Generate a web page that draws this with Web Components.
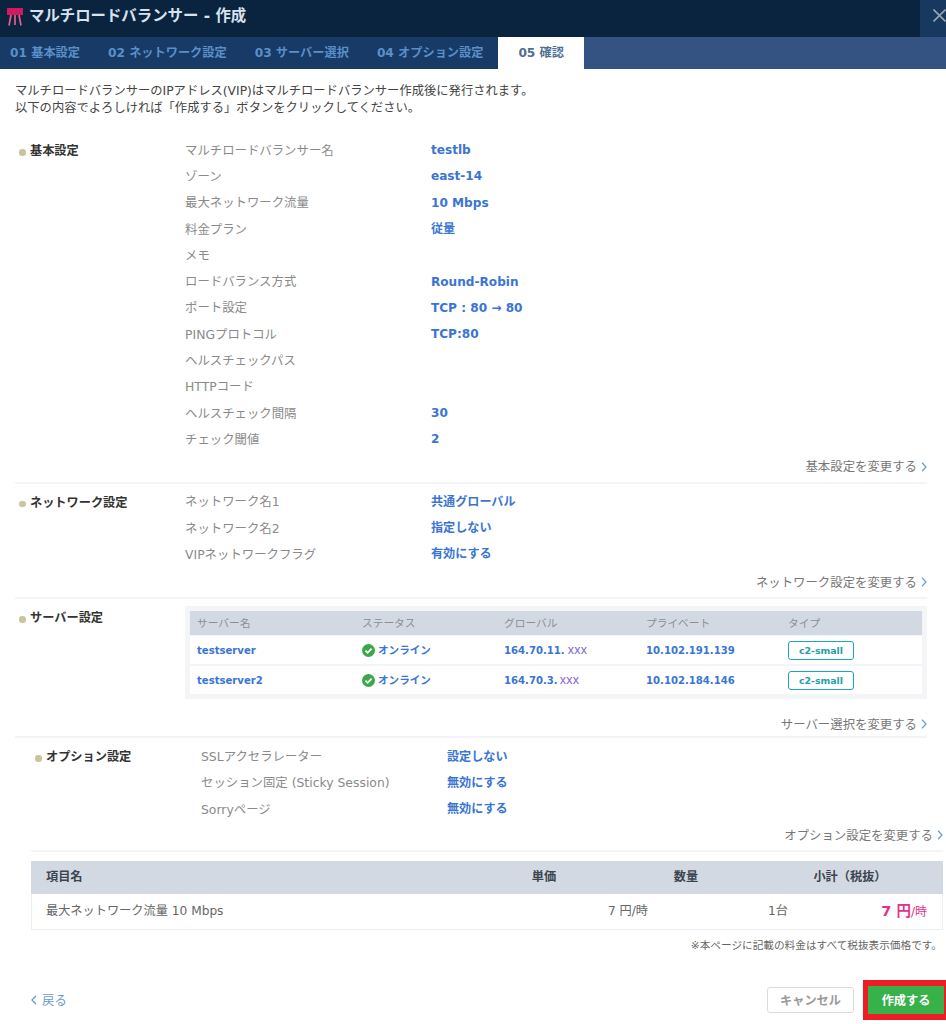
<!DOCTYPE html>
<html lang="ja">
<head>
<meta charset="utf-8">
<title>マルチロードバランサー - 作成</title>
<style>
  html, body { margin:0; padding:0; background:#fff; }
  body { width:946px; height:1024px; overflow:hidden; font:12.4px/17px "DejaVu Sans","Noto Sans CJK JP",sans-serif; color:#555; }
</style>
</head>
<body>
<lb-dialog>
  <lb-header slot="header">マルチロードバランサー - 作成</lb-header>
  <lb-tabs slot="tabs">
    <lb-tab>01 基本設定</lb-tab>
    <lb-tab>02 ネットワーク設定</lb-tab>
    <lb-tab>03 サーバー選択</lb-tab>
    <lb-tab>04 オプション設定</lb-tab>
    <lb-tab active>05 確認</lb-tab>
  </lb-tabs>

  <lb-intro>マルチロードバランサーのIPアドレス(VIP)はマルチロードバランサー作成後に発行されます。<br>以下の内容でよろしければ「作成する」ボタンをクリックしてください。</lb-intro>

  <lb-section title="基本設定" link="基本設定を変更する" first>
    <lb-row key="マルチロードバランサー名">testlb</lb-row>
    <lb-row key="ゾーン">east-14</lb-row>
    <lb-row key="最大ネットワーク流量">10 Mbps</lb-row>
    <lb-row key="料金プラン">従量</lb-row>
    <lb-row key="メモ"></lb-row>
    <lb-row key="ロードバランス方式">Round-Robin</lb-row>
    <lb-row key="ポート設定">TCP : 80 → 80</lb-row>
    <lb-row key="PINGプロトコル">TCP:80</lb-row>
    <lb-row key="ヘルスチェックパス"></lb-row>
    <lb-row key="HTTPコード"></lb-row>
    <lb-row key="ヘルスチェック間隔">30</lb-row>
    <lb-row key="チェック閾値">2</lb-row>
  </lb-section>

  <lb-section title="ネットワーク設定" link="ネットワーク設定を変更する">
    <lb-row key="ネットワーク名1">共通グローバル</lb-row>
    <lb-row key="ネットワーク名2">指定しない</lb-row>
    <lb-row key="VIPネットワークフラグ">有効にする</lb-row>
  </lb-section>

  <lb-section title="サーバー設定" link="サーバー選択を変更する" table>
    <lb-servers>
      <lb-server name="testserver" global="164.70.11." mask="xxx" gap="3" private="10.102.191.139" type="c2-small"></lb-server>
      <lb-server name="testserver2" global="164.70.3." mask="xxx" gap="2" private="10.102.184.146" type="c2-small"></lb-server>
    </lb-servers>
  </lb-section>

  <lb-section title="オプション設定" link="オプション設定を変更する" shifted>
    <lb-row key="SSLアクセラレーター">設定しない</lb-row>
    <lb-row key="セッション固定 (Sticky Session)">無効にする</lb-row>
    <lb-row key="Sorryページ">無効にする</lb-row>
  </lb-section>

  <lb-bill></lb-bill>
  <lb-footer></lb-footer>
</lb-dialog>

<script>
const chevron = (dir, color) => `<svg width="6" height="10" viewBox="0 0 6 10" fill="none" stroke="${color}" stroke-width="1.3"><path d="${dir == 'left' ? 'M5 .8 1 5l4 4.2' : 'M1 .8 5 5 1 9.2'}"/></svg>`;

class LbDialog extends HTMLElement {
  connectedCallback() {
    this.attachShadow({mode: 'open'}).innerHTML = `
      <style>
        :host { display:flex; flex-direction:column; width:946px; height:1024px; }
        main { padding:14px 19px 0 15px; }
      </style>
      <slot name="header"></slot>
      <slot name="tabs"></slot>
      <main><slot></slot></main>`;
  }
}

class LbHeader extends HTMLElement {
  connectedCallback() {
    this.attachShadow({mode: 'open'}).innerHTML = `
      <style>
        :host { display:flex; align-items:center; height:37px; background:#0a2440; }
        svg.logo { margin:0 5px 4px 7px; flex:none; }
        h1 { flex:1; margin:0 0 6px; font:bold 15.4px/22px "DejaVu Sans","Noto Sans CJK JP",sans-serif; color:#d8e2ee; }
        button { width:26px; height:37px; padding:0 0 6px 13px; flex:none; border:0; background:#17395f; display:flex; align-items:center; justify-content:flex-start; overflow:hidden; }
      </style>
      <svg class="logo" width="17" height="18" viewBox="0 0 17 18"><rect width="16" height="7" fill="#d2185f"/><path d="M4 7 2 17.5M8 7v10M12 7l2 10.5" stroke="#e0608f" stroke-width="1.7" fill="none"/></svg>
      <h1><slot></slot></h1>
      <button aria-label="閉じる"><svg width="13" height="13" viewBox="0 0 13 13" stroke="#98a4b0" stroke-width="1.6" style="flex:none"><path d="M.5.5l12 12M12.5.5l-12 12"/></svg></button>`;
  }
}

class LbTabs extends HTMLElement {
  connectedCallback() {
    this.attachShadow({mode: 'open'}).innerHTML = `
      <style>
        :host { display:flex; height:32px; background:#345383; }
        div { display:flex; background:#173a66; }
        .rest { flex:1; background:none; }
      </style>
      <div><slot></slot></div><div class="rest"></div>`;
  }
}

class LbTab extends HTMLElement {
  connectedCallback() {
    this.attachShadow({mode: 'open'}).innerHTML = `
      <style>
        :host { display:flex; align-items:center; padding:0 15px 0 13px; font:bold 12.2px/17px "DejaVu Sans","Noto Sans CJK JP",sans-serif; color:#5b8fc9; white-space:nowrap; }
        :host(:first-child) { padding-left:10px; }
        :host([active]) { background:#fff; color:#4f7095; padding:0 20px; }
      </style>
      <slot></slot>`;
  }
}

class LbIntro extends HTMLElement {
  connectedCallback() {
    this.attachShadow({mode: 'open'}).innerHTML = `
      <style>:host { display:block; margin-bottom:20px; color:#444; font-size:12.3px; line-height:17px; }</style>
      <slot></slot>`;
  }
}

class LbSection extends HTMLElement {
  connectedCallback() {
    const title = this.getAttribute('title'), link = this.getAttribute('link');
    this.removeAttribute('title');
    this.attachShadow({mode: 'open'}).innerHTML = `
      <style>
        :host { display:block; border-bottom:2px solid #f3f4f7; padding:5px 0 5px; }
        :host([first]) { padding-top:0; }
        :host([shifted]) { margin:0 -16px 0 16px; padding-top:5px; }
        :host([table]) { padding-top:7px; padding-bottom:2px; }
        .grid { display:grid; grid-template-columns:170px 1fr; }
        h2 { margin:0; padding:6px 0 0 15px; font:bold 12.2px/17px "DejaVu Sans","Noto Sans CJK JP",sans-serif; color:#333; display:flex; align-items:center; position:relative; height:17px; }
        h2::before { content:""; position:absolute; left:4px; top:12px; width:6.5px; height:6.5px; border-radius:50%; background:#c9c49c; }
        :host([table]) h2 { padding-top:4px; }
        :host([table]) h2::before { top:10px; }
        a { display:flex; justify-content:flex-end; align-items:center; gap:4px; height:20px; margin-top:4px; color:#777; text-decoration:none; }
        :host(:nth-of-type(2)) a { margin-top:5px; }
        :host([table]) a { margin-top:15px; }
        :host([shifted]) a { margin-top:3px; }
      </style>
      <div class="grid">
        <h2>${title}</h2>
        <div><slot></slot></div>
      </div>
      <a href="#">${link}${chevron('right', '#6f9fd8')}</a>`;
  }
}

class LbRow extends HTMLElement {
  connectedCallback() {
    this.attachShadow({mode: 'open'}).innerHTML = `
      <style>
        :host { display:grid; grid-template-columns:246px 1fr; height:26.3px; align-items:center; }
        .k { color:#8a8a8a; white-space:nowrap; }
        .v { color:#3a75d4; font-weight:bold; font-size:12.1px; padding-top:1px; }
      </style>
      <div class="k">${this.getAttribute('key')}</div>
      <div class="v"><slot></slot></div>`;
  }
}

class LbServers extends HTMLElement {
  connectedCallback() {
    this.attachShadow({mode: 'open'}).innerHTML = `
      <style>
        :host { display:block; background:#f4f5f7; padding:5px; font-size:10.7px; }
        .head { display:grid; grid-template-columns:165px 142px 142px 142px 1fr; height:24px; align-items:center; padding-left:7px; background:#d3d9e2; color:#8b8f94; margin-bottom:1px; }
      </style>
      <div class="head"><span>サーバー名</span><span>ステータス</span><span>グローバル</span><span>プライベート</span><span>タイプ</span></div>
      <slot></slot>`;
  }
}

class LbServer extends HTMLElement {
  connectedCallback() {
    const a = n => this.getAttribute(n);
    this.attachShadow({mode: 'open'}).innerHTML = `
      <style>
        :host { display:grid; grid-template-columns:165px 142px 142px 142px 1fr; height:28px; align-items:center; padding-left:7px; background:#fff; color:#3a75d4; font-weight:bold; font-size:10.6px; }
        :host(:last-child) { margin-top:2px; }
        .lat { font-size:10.1px; }
        .st { display:flex; align-items:center; gap:3px; }
        i { font:normal 12.5px "Liberation Sans",sans-serif; color:#8066d0; letter-spacing:.3px; }
        b { box-sizing:border-box; width:66px; height:19px; border:1px solid #1aa8b8; border-radius:3px; font-size:9.4px; color:#26a0a8; display:flex; align-items:center; justify-content:center; }
      </style>
      <span class="lat">${a('name')}</span>
      <span class="st"><svg width="13" height="13" viewBox="0 0 13 13"><circle cx="6.5" cy="6.5" r="6.5" fill="#3aa84a"/><path d="M3.4 6.6 5.6 8.8 9.6 4.6" fill="none" stroke="#fff" stroke-width="1.8"/></svg>オンライン</span>
      <span class="lat">${a('global')}<i style="margin-left:${a('gap')}px">${a('mask')}</i></span>
      <span class="lat">${a('private')}</span>
      <span><b>${a('type')}</b></span>`;
  }
}

class LbBill extends HTMLElement {
  connectedCallback() {
    this.attachShadow({mode: 'open'}).innerHTML = `
      <style>
        :host { display:block; margin:9px -16px 0 16px; font-size:12.2px; }
        .head { display:grid; grid-template-columns:442px 142px 142px 1fr; height:33px; align-items:center; background:#d3d9e2; color:#3c4450; font-weight:bold; text-align:center; }
        .head .name { padding-left:15px; }
        .body { box-sizing:border-box; display:grid; grid-template-columns:1fr 45px 140px 139px; height:36px; align-items:center; border:1px solid #eceef1; border-top:0; padding-right:15px; color:#666; text-align:right; }
        .name { text-align:left; padding-left:14px; }
        .price { color:#e0338a; font-size:12px; }
        .price b { font-size:14.5px; }
        p { margin:7px 1px 0 0; height:17px; text-align:right; font-size:10.65px; color:#666; }
      </style>
      <div class="head"><span class="name">項目名</span><span>単価</span><span>数量</span><span>小計（税抜）</span></div>
      <div class="body"><span class="name">最大ネットワーク流量 10 Mbps</span><span style="white-space:nowrap">7 円/時</span><span>1台</span><span class="price"><b>7 円</b>/時</span></div>
      <p>※本ページに記載の料金はすべて税抜表示価格です。</p>`;
  }
}

class LbFooter extends HTMLElement {
  connectedCallback() {
    this.attachShadow({mode: 'open'}).innerHTML = `
      <style>
        :host { display:flex; align-items:center; justify-content:space-between; margin:33px -19px 0 16px; height:26px; }
        a { display:flex; align-items:center; gap:5px; color:#6b9bd2; text-decoration:none; font-size:12.4px; }
        .btns { display:flex; align-items:center; gap:14px; margin-right:2px; }
        button { box-sizing:border-box; border-radius:3px; font:bold 12.2px "DejaVu Sans","Noto Sans CJK JP",sans-serif; padding:0; }
        .cancel { width:87px; height:26px; background:#fff; border:1px solid #dcdcdc; color:#9a9a9a; }
        .wrap { position:relative; display:flex; }
        .go { width:76px; height:28px; border-radius:0; background:#37b24a; border:0; color:#fff; }
        .mark { position:absolute; inset:-6px -2px -6px -5px; border:solid #ee1c25; border-width:6px 2px 6px 5px; pointer-events:none; }
      </style>
      <a href="#">${chevron('left', '#6b9bd2')}戻る</a>
      <div class="btns"><button class="cancel">キャンセル</button><span class="wrap"><button class="go">作成する</button><span class="mark"></span></span></div>`;
  }
}

customElements.define('lb-dialog', LbDialog);
customElements.define('lb-header', LbHeader);
customElements.define('lb-tabs', LbTabs);
customElements.define('lb-tab', LbTab);
customElements.define('lb-intro', LbIntro);
customElements.define('lb-section', LbSection);
customElements.define('lb-row', LbRow);
customElements.define('lb-servers', LbServers);
customElements.define('lb-server', LbServer);
customElements.define('lb-bill', LbBill);
customElements.define('lb-footer', LbFooter);
</script>
</body>
</html>
